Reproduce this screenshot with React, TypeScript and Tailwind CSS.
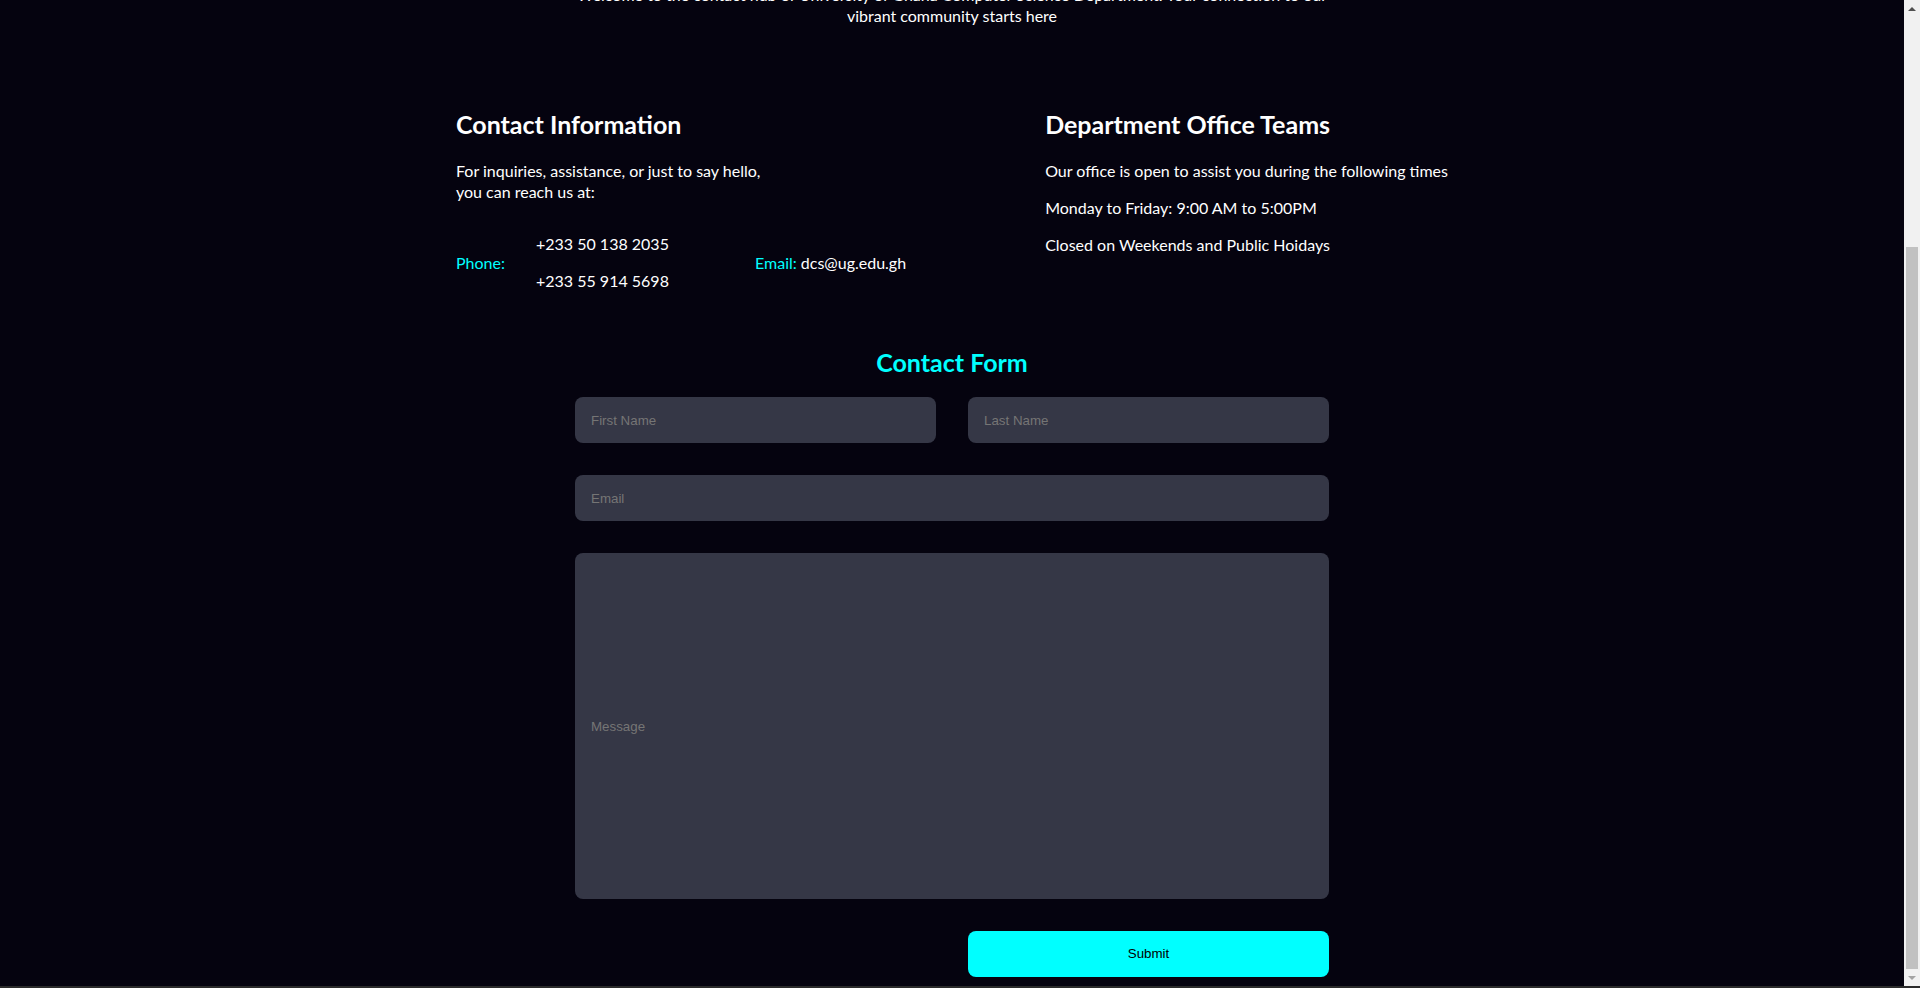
import React, { useLayoutEffect, useRef } from 'react'

const hours = [
    'Our office is open to assist you during the following times',
    'Monday to Friday: 9:00 AM to 5:00PM',
    'Closed on Weekends and Public Hoidays',
]

const inputClass =
    "w-full h-[46px] rounded-lg bg-[#353746] px-4 text-[13.333px] font-['Liberation_Sans',Arial,sans-serif] text-white placeholder:text-[#757575] outline-none"

const Arrow: React.FC<{ up?: boolean, color: string }> = ({ up, color }) => (
    <div className="h-[17px] flex items-center justify-center">
        <svg width="8" height="4" viewBox="0 0 8 4">
            <path d={up ? 'M0 4 L4 0 L8 4 Z' : 'M0 0 L4 4 L8 0 Z'} fill={color} />
        </svg>
    </div>
)

const App: React.FC = () => {
    const scroller = useRef<HTMLDivElement>(null)

    // the shot is of the bottom of the page
    useLayoutEffect(() => {
        if (scroller.current) scroller.current.scrollTop = scroller.current.scrollHeight
    }, [])

    return (
        <div className="flex flex-col h-[988px] bg-[#05030f]">
            <div className="flex flex-1 min-h-0">
                <div ref={scroller} className="flex-1 overflow-y-scroll [scrollbar-width:none] font-['Lato',sans-serif] text-white">
                    <div className="h-[300px] flex items-end justify-center pb-10">
                        <h1 className="text-5xl font-bold text-[#00ffff]">Contact Us</h1>
                    </div>

                    <p className="mx-auto w-[780px] text-center text-base leading-[21px]">
                        Welcome to the contact hub of University of Ghana Computer Science Department. Your connection to our
                        <br />
                        vibrant community starts here
                    </p>

                    <div className="mx-auto mt-[82px] flex w-[992px]">
                        <div className="w-[592px]">
                            <h2 className="text-[25px] leading-8 font-bold">Contact Information</h2>
                            <p className="mt-5 text-base leading-[21px]">
                                For inquiries, assistance, or just to say hello,
                                <br />
                                you can reach us at:
                            </p>
                            <div className="mt-[31px] flex items-center text-base leading-[21px]">
                                <span className="w-[80px] text-[#00ffff]">Phone:</span>
                                <div className="w-[219px] flex flex-col gap-4">
                                    <span>+233 50 138 2035</span>
                                    <span>+233 55 914 5698</span>
                                </div>
                                <span>
                                    <span className="text-[#00ffff]">Email: </span>dcs@ug.edu.gh
                                </span>
                            </div>
                        </div>
                        <div className="flex-1">
                            <h2 className="text-[25px] leading-8 font-bold whitespace-nowrap">Department Office Teams</h2>
                            <div className="mt-5 flex flex-col gap-4 text-base leading-[21px] whitespace-nowrap">
                                {hours.map((line, key) => (
                                    <p key={key}>{line}</p>
                                ))}
                            </div>
                        </div>
                    </div>

                    <h2 className="mt-[55px] text-center text-[25px] leading-8 font-bold text-[#00ffff]">Contact Form</h2>

                    <form className="mx-auto mt-[19px] w-[754px] flex flex-col gap-8 pb-[9px]" onSubmit={(e) => e.preventDefault()}>
                        <div className="grid grid-cols-2 gap-8">
                            <input className={inputClass} placeholder="First Name" />
                            <input className={inputClass} placeholder="Last Name" />
                        </div>
                        <input className={inputClass} placeholder="Email" />
                        <input className="w-full h-[346px] rounded-lg bg-[#353746] px-4 text-[13.333px] font-['Liberation_Sans',Arial,sans-serif] text-white placeholder:text-[#757575] outline-none" placeholder="Message" />
                        <div className="grid grid-cols-2 gap-8">
                            <div />
                            <button type="submit" className="h-[46px] rounded-lg bg-[#00ffff] text-[13.333px] text-black font-['Liberation_Sans',Arial,sans-serif]">
                                Submit
                            </button>
                        </div>
                    </form>
                </div>

                {/* browser scrollbar, page is at the bottom */}
                <div className="w-[16px] flex flex-col bg-[#f1f1f1]">
                    <Arrow up color="#505050" />
                    <div className="h-[230px]" />
                    <div className="flex-1 mx-[2px] bg-[#c1c1c1]" />
                    <Arrow color="#a3a3a3" />
                </div>
            </div>
            <div className="h-[2px] bg-[#2b2b2b]" />
        </div>
    )
}

export default App
